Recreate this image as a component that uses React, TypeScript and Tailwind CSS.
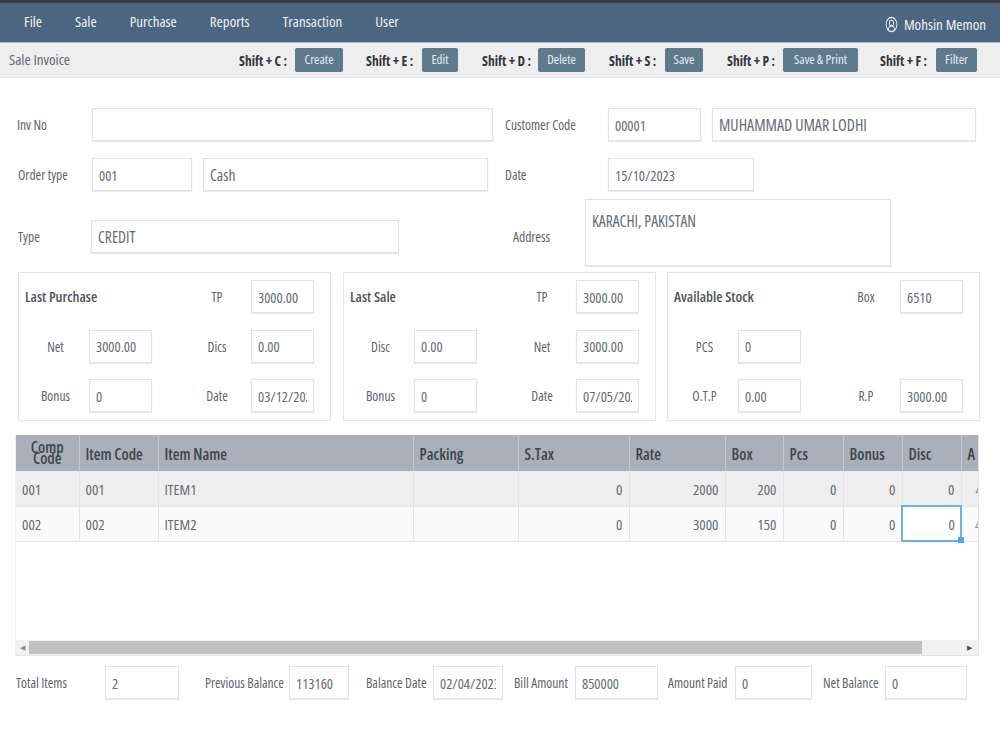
import { CircleUserRound } from "lucide-react";

const NAV_ITEMS = ["File", "Sale", "Purchase", "Reports", "Transaction", "User"];

const ACTIONS = [
  { keys: "Shift + C :", label: "Create", width: "w-[48px]", offset: "" },
  { keys: "Shift + E :", label: "Edit", width: "w-[36px]", offset: "" },
  { keys: "Shift + D :", label: "Delete", width: "w-[47px]", offset: "ml-[1px]" },
  { keys: "Shift + S :", label: "Save", width: "w-[38px]", offset: "ml-[1px]" },
  { keys: "Shift + P :", label: "Save & Print", width: "w-[75px]", offset: "ml-[1px]" },
  { keys: "Shift + F :", label: "Filter", width: "w-[41px]", offset: "-ml-[1px]" },
];

const COLUMNS = [
  { label: "Comp Code", width: "w-[63px]" },
  { label: "Item Code", width: "w-[79px]" },
  { label: "Item Name", width: "w-[255px]" },
  { label: "Packing", width: "w-[105px]" },
  { label: "S.Tax", width: "w-[111px]" },
  { label: "Rate", width: "w-[96px]" },
  { label: "Box", width: "w-[58px]" },
  { label: "Pcs", width: "w-[60px]" },
  { label: "Bonus", width: "w-[59px]" },
  { label: "Disc", width: "w-[59px]" },
  { label: "A", width: "w-[17px]" },
];

const ROWS = [
  { comp: "001", code: "001", name: "ITEM1", tax: "0", rate: "2000", box: "200", bg: "bg-[#eeeeee]" },
  { comp: "002", code: "002", name: "ITEM2", tax: "0", rate: "3000", box: "150", bg: "bg-[#fafafa]" },
];

function Field({
  value,
  className,
  textSize = "text-[14.5px]",
}: {
  value: string;
  className: string;
  textSize?: string;
}) {
  return (
    <input
      readOnly
      value={value}
      className={`h-[33px] shrink-0 border border-[#dfe3e8] bg-white px-1.5 pt-[1px] ${textSize} text-[#666b70] shadow-[0_1px_1px_#e8eaed] outline-none ${className}`}
    />
  );
}

function Label({ children, className = "" }: { children: string; className?: string }) {
  return (
    <span className={`shrink-0 whitespace-nowrap pt-[2px] text-[13.5px] text-[#5f6468] ${className}`}>{children}</span>
  );
}

function StatPanel({
  title,
  rows,
  className = "",
}: {
  title: string;
  rows: Array<[string, string, string, string]>;
  className?: string;
}) {
  return (
    <div
      className={`grid h-[149px] w-[313px] shrink-0 grid-cols-[70px_63px_99px_63px] content-start items-center gap-y-[16.5px] border border-[#e2e5e8] pt-[7px] ${className}`}
    >
      {rows.map(([leftLabel, leftValue, rightLabel, rightValue], index) => (
        <div key={rightLabel + index} className="contents">
          {index === 0 ? (
            <span className="col-span-2 whitespace-nowrap pl-[6px] text-[14.5px] font-semibold text-[#50555a]">{title}</span>
          ) : (
            <>
              <Label className="pl-[3px] text-center">{leftLabel}</Label>
              <Field value={leftValue} className="w-[63px]" />
            </>
          )}
          {rightLabel ? (
            <>
              <Label className="pl-[31px] text-center">{rightLabel}</Label>
              <Field value={rightValue} className="w-[63px]" />
            </>
          ) : (
            <div className="col-span-2 h-[33px]" />
          )}
        </div>
      ))}
    </div>
  );
}

export default function App() {
  return (
    <div className="flex h-[750px] w-[1000px] flex-col overflow-hidden bg-white font-['Open_Sans','Noto_Sans',sans-serif] [font-stretch:75%]">
      <div className="h-[3px] shrink-0 bg-[#3b3d42]" />

      {/* Top menu */}
      <div className="flex h-[40px] shrink-0 items-center justify-between border-b border-[#a9bccd] bg-[#4c6580] pl-[24px] pr-[14px] text-[15px] text-[#eef2f5]">
        <nav className="flex -translate-y-[1px] gap-[33px]">
          {NAV_ITEMS.map((item) => (
            <span key={item}>{item}</span>
          ))}
        </nav>
        <div className="flex items-center gap-[6px] pt-[3px]">
          <CircleUserRound className="h-[17px] w-[13px]" strokeWidth={1.6} preserveAspectRatio="none" />
          <span className="text-[15px]">Mohsin Memon</span>
        </div>
      </div>

      {/* Action bar */}
      <div className="flex h-[35px] shrink-0 items-center justify-between border-b border-[#e4e6e8] bg-[#eeeeee] pl-[9px] pr-[23px]">
        <span className="pb-[2px] text-[15px] text-[#666b70]">Sale Invoice</span>
        <div className="flex gap-[23px]">
          {ACTIONS.map((action) => (
            <div key={action.label} className={`flex items-center gap-[7px] ${action.offset}`}>
              <span className="w-[49px] whitespace-nowrap pt-[2px] text-[13.5px] font-bold text-[#33373b]">{action.keys}</span>
              <button className={`h-[24px] ${action.width} rounded-[2px] bg-[#5d7b8c] text-center text-[13px] whitespace-nowrap text-[#e6edf0]`}>
                {action.label}
              </button>
            </div>
          ))}
        </div>
      </div>

      {/* Invoice header */}
      <div className="flex flex-col pl-[17px] pt-[30px]">
        <div className="flex items-center">
          <Label className="w-[75px]">Inv No</Label>
          <Field value="" className="w-[401px]" />
          <Label className="ml-[12px] w-[103px]">Customer Code</Label>
          <Field value="00001" className="w-[93px]" />
          <Field value="MUHAMMAD UMAR LODHI" textSize="text-[16px]" className="ml-[11px] w-[264px]" />
        </div>
        <div className="mt-[17px] flex items-center">
          <Label className="w-[75px] pl-[1px]">Order type</Label>
          <Field value="001" className="w-[100px]" />
          <Field value="Cash" textSize="text-[15.5px]" className="ml-[11px] w-[285px]" />
          <Label className="ml-[17px] w-[103px]">Date</Label>
          <Field value="15/10/2023" className="w-[146px]" />
        </div>
        <div className="mt-[8px] flex items-start">
          <div className="mt-[21px] flex items-center">
            <Label className="w-[74px] pl-[1px]">Type</Label>
            <Field value="CREDIT" textSize="text-[15.5px]" className="w-[308px]" />
          </div>
          <Label className="ml-[114px] mt-[26px] w-[72px]">Address</Label>
          <textarea
            readOnly
            value="KARACHI, PAKISTAN"
            className="h-[67px] w-[306px] shrink-0 resize-none border border-[#dfe3e8] bg-white px-1.5 py-[14px] text-[15.5px] leading-none text-[#666b70] shadow-[0_1px_1px_#e8eaed] outline-none"
          />
        </div>
      </div>

      {/* Last purchase / sale / stock */}
      <div className="mt-[6px] flex gap-[12px] pl-[18px]">
        <StatPanel
          title="Last Purchase"
          rows={[
            ["", "", "TP", "3000.00"],
            ["Net", "3000.00", "Dics", "0.00"],
            ["Bonus", "0", "Date", "03/12/2023"],
          ]}
        />
        <StatPanel
          title="Last Sale"
          rows={[
            ["", "", "TP", "3000.00"],
            ["Disc", "0.00", "Net", "3000.00"],
            ["Bonus", "0", "Date", "07/05/2023"],
          ]}
        />
        <StatPanel
          title="Available Stock"
          className="-ml-[1px]"
          rows={[
            ["", "", "Box", "6510"],
            ["PCS", "0", "", ""],
            ["O.T.P", "0.00", "R.P", "3000.00"],
          ]}
        />
      </div>

      {/* Items grid */}
      <div className="ml-[15px] mt-[14px] flex h-[221px] w-[964px] shrink-0 flex-col border-x border-b border-[#e2e5e8] border-l-[#eef0f2]">
        <div className="flex-1 overflow-hidden">
          <table className="w-[962px] table-fixed border-collapse">
            <colgroup>
              {COLUMNS.map((col) => (
                <col key={col.label} className={col.width} />
              ))}
            </colgroup>
            <thead>
              <tr className="h-[36px] bg-[#a9b0b9] text-left text-[15.5px] font-semibold text-[#3e454c]">
                {COLUMNS.map((col, index) => (
                  <th
                    key={col.label}
                    className={`overflow-hidden border-r border-[#c4c9cf] px-[6px] font-semibold ${
                      index === 0 ? "text-center leading-[11px]" : "pt-[3px]"
                    }`}
                  >
                    {col.label}
                  </th>
                ))}
              </tr>
            </thead>
            <tbody className="text-[15px] text-[#666b70]">
              {ROWS.map((row, rowIndex) => (
                <tr key={row.comp} className={`h-[35px] border-b border-[#e2e4e6] ${row.bg}`}>
                  <td className="border-r border-[#e2e4e6] px-[6px] pt-[1px]">{row.comp}</td>
                  <td className="border-r border-[#e2e4e6] px-[6px] pt-[1px]">{row.code}</td>
                  <td className="border-r border-[#e2e4e6] px-[6px] pt-[1px]">{row.name}</td>
                  <td className="border-r border-[#e2e4e6] px-[6px]" />
                  <td className="border-r border-[#e2e4e6] px-[6px] pt-[1px] text-right">{row.tax}</td>
                  <td className="border-r border-[#e2e4e6] px-[6px] pt-[1px] text-right">{row.rate}</td>
                  <td className="border-r border-[#e2e4e6] px-[6px] pt-[1px] text-right">{row.box}</td>
                  <td className="border-r border-[#e2e4e6] px-[6px] pt-[1px] text-right">0</td>
                  <td className="border-r border-[#e2e4e6] px-[6px] pt-[1px] text-right">0</td>
                  <td
                    className={
                      rowIndex === 1
                        ? "relative bg-white px-[6px] pt-[1px] text-right outline outline-2 -outline-offset-1 outline-[#6cb0e8]"
                        : "border-r border-[#e2e4e6] px-[6px] pt-[1px] text-right"
                    }
                  >
                    0
                    {rowIndex === 1 && (
                      <span className="absolute -bottom-[2px] -right-[3px] h-[6px] w-[6px] bg-[#5aa6e6]" />
                    )}
                  </td>
                  <td className="overflow-hidden whitespace-nowrap pl-[14px] pt-[1px] text-[#8a8f94]">4</td>
                </tr>
              ))}
            </tbody>
          </table>
        </div>

        {/* Horizontal scrollbar */}
        <div className="flex h-[15px] shrink-0 items-center bg-[#f1f1f1]">
          <span className="flex w-[13px] justify-center text-[7px] leading-none text-[#8a8a8a]">◀</span>
          <div className="h-[13px] w-[893px] bg-[#c1c1c1]" />
          <span className="ml-auto flex w-[17px] justify-center text-[7px] leading-none text-[#505050]">▶</span>
        </div>
      </div>

      {/* Totals */}
      <div className="mt-[10px] flex items-center pl-[16px]">
        <Label className="w-[89px]">Total Items</Label>
        <Field value="2" className="w-[74px]" />
        <Label className="ml-[26px] w-[84px]">Previous Balance</Label>
        <Field value="113160" className="w-[60px]" />
        <Label className="ml-[17px] w-[67px]">Balance Date</Label>
        <Field value="02/04/2023" className="w-[70px]" />
        <Label className="ml-[11px] w-[61px]">Bill Amount</Label>
        <Field value="850000" className="w-[83px]" />
        <Label className="ml-[10px] w-[67px]">Amount Paid</Label>
        <Field value="0" className="w-[77px]" />
        <Label className="ml-[11px] w-[62px]">Net Balance</Label>
        <Field value="0" className="w-[82px]" />
      </div>
    </div>
  );
}
